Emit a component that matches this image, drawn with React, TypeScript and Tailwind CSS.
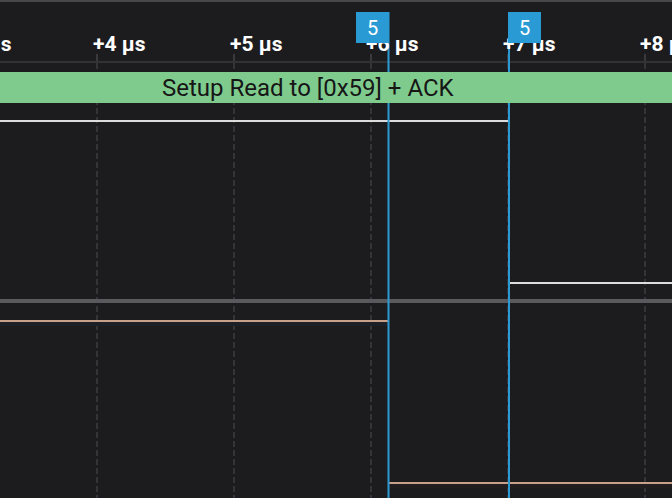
import React from 'react';

const GRID_X = [97, 234, 371, 508, 645];

const LABELS = [
  { x: -41, text: '+3 µs' },
  { x: 93, text: '+4 µs' },
  { x: 230, text: '+5 µs' },
  { x: 366, text: '+6 µs' },
  { x: 503, text: '+7 µs' },
  { x: 640, text: '+8 µs' },
];

function Waveforms() {
  return (
    <svg className="absolute inset-0" width={672} height={498} viewBox="0 0 672 498">
      {/* ruler ticks + dashed grid */}
      {GRID_X.map((x) => (
        <g key={x}>
          <line x1={x} y1={54} x2={x} y2={63} stroke="#45454a" strokeWidth={1.5} />
          <line x1={x} y1={63} x2={x} y2={498} stroke="#3d3d42" strokeWidth={1.5} strokeDasharray="6 3" />
        </g>
      ))}
      <rect x={0} y={61} width={672} height={2} fill="#323236" />

      {/* channel 0 */}
      <rect x={0} y={120} width={508} height={2} fill="#dcdcdc" />
      <rect x={509} y={282} width={163} height={2} fill="#dcdcdc" />

      {/* bus separator */}
      <rect x={0} y={299} width={672} height={4} fill="#5a5a5e" />

      {/* channel 1 */}
      <rect x={0} y={320} width={388} height={2} fill="#c9a08a" />
      <rect x={0} y={322} width={388} height={4} fill="#1e2027" />
      <rect x={389} y={482} width={283} height={2} fill="#c9a08a" />
      <rect x={389} y={484} width={283} height={4} fill="#221d1e" />

      {/* cursors */}
      <rect x={387.5} y={12} width={2} height={486} fill="#2a9ad4" />
      <rect x={508} y={12} width={2} height={486} fill="#2a9ad4" />
    </svg>
  );
}

export default function App() {
  return (
    <div
      className="relative w-[672px] h-[498px] overflow-hidden bg-[#1c1c1f]"
      style={{ fontFamily: 'Roboto, "Liberation Sans", sans-serif' }}
    >
      <div className="absolute left-0 top-0 w-full h-[2px] bg-[#48484b]" />
      <Waveforms />

      {/* time ruler labels */}
      {LABELS.map((l) => (
        <div
          key={l.text}
          className="absolute top-[31px] text-[21px] leading-[26px] font-bold text-white whitespace-nowrap"
          style={{ left: l.x }}
        >
          {l.text}
        </div>
      ))}

      {/* decoded frame */}
      <div className="absolute left-0 top-[72px] w-full h-[31px] bg-[#7fcb8d] flex items-center">
        <span className="ml-[162px] text-[24px] leading-none text-[#161616] whitespace-nowrap">
          Setup Read to [0x59] + ACK
        </span>
      </div>

      {/* cursor flags */}
      <div className="absolute left-[356px] top-[12px] w-[33px] h-[31px] bg-[#2a9ad4] flex items-center justify-center text-white text-[20px]">
        5
      </div>
      <div className="absolute left-[508px] top-[12px] w-[33px] h-[31px] bg-[#2a9ad4] flex items-center justify-center text-white text-[20px]">
        5
      </div>
    </div>
  );
}
